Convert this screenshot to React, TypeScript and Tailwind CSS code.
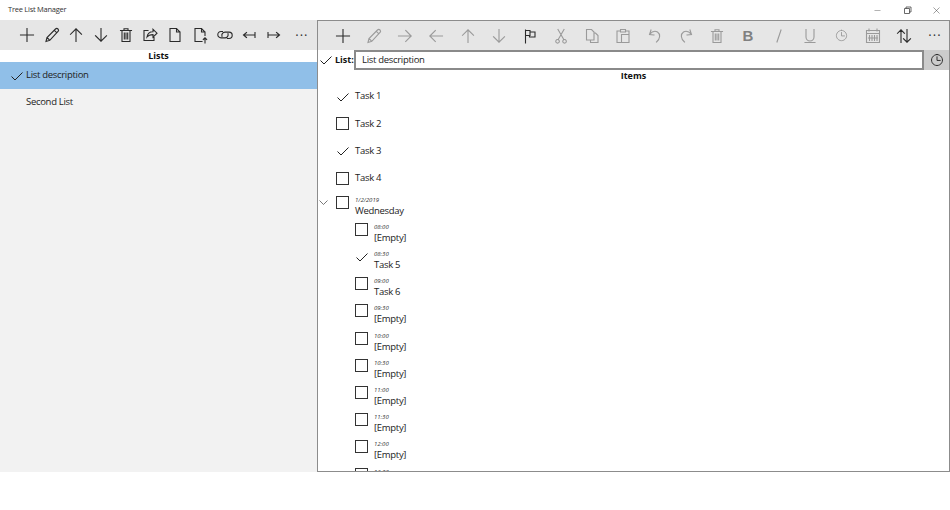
import type { ReactNode } from "react";
import { Minus, X } from "lucide-react";

const font = { fontFamily: '"Open Sans", "Liberation Sans", sans-serif' };

function Svg({ children, dim, size = 18 }: { children: ReactNode; dim?: boolean; size?: number }) {
  return (
    <svg
      width={size}
      height={size}
      viewBox="0 0 18 18"
      fill="none"
      stroke={dim ? "#9a9a9a" : "#2b2b2b"}
      strokeWidth="1.1"
      strokeLinecap="square"
      className="shrink-0"
    >
      {children}
    </svg>
  );
}

const icons: Record<string, ReactNode> = {
  plus: <path d="M9 2.5v13M2.5 9h13" />,
  pencil: <path d="M3 15.5l1-4L12.5 3a1.6 1.6 0 0 1 2.5 2.5L6.8 14.3zM4 11.5l2.8 2.8M11.3 4.3l2.5 2.5" />,
  up: <path d="M9 15.5V2.8M3.5 8.3L9 2.8l5.5 5.5" />,
  down: <path d="M9 2.5v12.7M3.5 9.7L9 15.2l5.5-5.5" />,
  right: <path d="M2.5 9h12.7M9.7 3.5L15.2 9l-5.5 5.5" />,
  left: <path d="M15.5 9H2.8M8.3 3.5L2.8 9l5.5 5.5" />,
  trash: <path d="M3.5 4.5h11M7 4.5V2.8h4v1.7M5 4.5v11h8v-11M7.3 7v6M9 7v6M10.7 7v6" />,
  share: <path d="M7 4.5H3v10h10v-3M6 11c.5-3.5 3-5.3 6-5.3V3.3l4 3.9-4 3.9V8.600c-2.500 0-4.700.7-6 2.400z" />,
  file: <path d="M4 2.500h6.500L14 6v9.500H4zM10.500 2.500V6H14" />,
  fileUp: <path d="M11 15.500H4v-13h6.500L14 6v3.500M10.500 2.500V6H14M14 17v-5M12.300 13.500L14 11.800l1.700 1.700" />,
  link: <path d="M6.500 5.500H5a3.200 3.200 0 0 0 0 6.400h4a3.200 3.200 0 0 0 3-4.200M11.500 12.500H13a3.200 3.200 0 0 0 0-6.400H9a3.200 3.200 0 0 0-3 4.200" />,
  outdent: <path d="M14.500 9H3.500M6.500 6.500L3.500 9l3 2.500M15 6.500v5" />,
  indent: <path d="M3.500 9h11M11.500 6.500l3 2.500-3 2.500M3 6.500v5" />,
  flag: <path d="M4.500 16V3M4.500 3.500h4.500v1.500h5v5H8.500V8.500h-4M9 5v3.500" />,
  cut: <path d="M6 2.500l5.500 9.500M12 2.500L6.500 12M5.500 12.500a1.800 1.800 0 1 0 .1 0zM12.500 12.500a1.800 1.800 0 1 0 .1 0z" />,
  copy: <path d="M3.500 2.500h5L11 5v8H3.500zM11 6h1.500L15 8.500v7H7.500V13" />,
  paste: <path d="M6 4H3v11.500h4M12 4h3v3M6.500 2.500h5V5h-5zM7.500 7.500H15v8H7.500z" />,
  undo: <path d="M5 3L3.500 7.500 8 8M3.500 7.500C6 4.500 9 3.500 11.500 5c3 2 3 6.500-1 10" />,
  redo: <path d="M13 3l1.500 4.500L10 8M14.500 7.500C12 4.500 9 3.500 6.500 5c-3 2-3 6.500 1 10" />,
  underline: <path d="M5 2.500v7.500a4 4 0 0 0 8 0V2.500M4 15.500h10" />,
  italic: <path d="M11 3l-4 12" />,
  clock: <path d="M9 2.800a6.200 6.200 0 1 0 .01 0zM9 5.500V9.500h3.500" />,
  calendar: <path d="M2.500 3.500h13v12h-13zM2.500 6.500h13M5 2v2M13 2v2M5.500 8.500v5M8 8.500v5M10.500 8.500v5M13 8.500v5M4.500 11h9" />,
  sort: <path d="M6 15.500V2.800M2.500 6.300L6 2.800l3.500 3.500M12 2.500v12.700M8.500 11.700l3.500 3.500 3.500-3.500" />,
};

function Dots() {
  return <span className="block w-[18px] shrink-0 text-center text-[13px] leading-none tracking-[1px] text-[#333]">···</span>;
}

function Check() {
  return (
    <svg width="14" height="14" viewBox="0 0 14 14" fill="none" stroke="#222" strokeWidth="1" className="shrink-0">
      <path d="M1.500 7.500l3.500 3.500 7.500-7.500" />
    </svg>
  );
}

function Mark({ done }: { done?: boolean }) {
  return (
    <span className="flex h-[13px] w-[13px] shrink-0 items-center justify-center">
      {done ? <Check /> : <span className="block h-[13px] w-[13px] border border-[#333]" />}
    </span>
  );
}

function Task({ label, done }: { label: string; done?: boolean }) {
  return (
    <div className="flex h-[27.2px] items-center pl-[18px]">
      <Mark done={done} />
      <span className="ml-[6px] text-[9.500px] tracking-[-0.3px] text-[#222]">{label}</span>
    </div>
  );
}

function Slot({ time, label, done }: { time: string; label: string; done?: boolean }) {
  return (
    <div className="flex h-[27.2px] shrink-0 items-center pl-[37px]">
      <Mark done={done} />
      <div className="ml-[6px] flex translate-y-[3px] flex-col pt-[3px]">
        <span className="text-[6px] italic leading-[8px] text-[#333]">{time}</span>
        <span className="text-[9.500px] leading-[14px] tracking-[-0.3px] text-[#222]">{label}</span>
      </div>
    </div>
  );
}

const leftTools = ["plus", "pencil", "up", "down", "trash", "share", "file", "fileUp", "link", "outdent", "indent"];
const rightTools: [string, boolean][] = [
  ["plus", false],
  ["pencil", true],
  ["right", true],
  ["left", true],
  ["up", true],
  ["down", true],
  ["flag", false],
  ["cut", true],
  ["copy", true],
  ["paste", true],
  ["undo", true],
  ["redo", true],
  ["trash", true],
];

const slots: [string, string, boolean?][] = [
  ["08:00", "[Empty]"],
  ["08:30", "Task 5", true],
  ["09:00", "Task 6"],
  ["09:30", "[Empty]"],
  ["10:00", "[Empty]"],
  ["10:30", "[Empty]"],
  ["11:00", "[Empty]"],
  ["11:30", "[Empty]"],
  ["12:00", "[Empty]"],
  ["12:30", "[Empty]"],
];

export default function App() {
  return (
    <div className="h-[510px] w-[950px] overflow-hidden bg-white" style={font}>
      <div className="flex h-5 items-center justify-between">
        <span className="pl-2 text-[7.500px] tracking-[-0.25px] text-[#333]">Tree List Manager</span>
        <div className="flex items-center">
          <span className="flex w-[30px] justify-center"><Minus size={9} strokeWidth={1} color="#333" /></span>
          <span className="flex w-[30px] justify-center">
            <svg width="9" height="9" viewBox="0 0 9 9" fill="none" stroke="#444" strokeWidth="0.800">
              <path d="M1.500 2.500h5v5h-5zM3 2.500V1h5v5H6.500" />
            </svg>
          </span>
          <span className="flex w-[28px] justify-center"><X size={11} strokeWidth={1} color="#333" /></span>
        </div>
      </div>

      <div className="flex h-[452px]">
        <aside className="flex w-[317px] shrink-0 flex-col bg-[#f2f2f2]">
          <div className="flex h-[30px] items-center bg-[#e6e6e6] pl-[18px]">
            <div className="flex items-center gap-[6.700px]">
              {leftTools.map((n, i) => (
                <Svg key={i}>{icons[n]}</Svg>
              ))}
            </div>
            <span className="ml-[10px]"><Dots /></span>
          </div>
          <div className="h-3 bg-white text-center text-[9px] font-bold leading-3 text-[#111]">Lists</div>
          <div className="flex h-[27px] items-center bg-[#90bfe8] pl-[10px] text-[9.500px] tracking-[-0.3px] text-[#222]">
            <Check />
            <span className="ml-[2px]">List description</span>
          </div>
          <div className="flex h-[27px] items-center pl-[26px] text-[9.500px] tracking-[-0.3px] text-[#222]">Second List</div>
        </aside>

        <main className="flex min-w-0 flex-1 flex-col overflow-hidden border border-[#8c8c8c]">
          <div className="flex h-[29px] shrink-0 items-center justify-between bg-[#e6e6e6] pl-4 pr-[5px]">
            {rightTools.map(([n, dim], i) => (
              <Svg key={i} dim={dim}>{icons[n]}</Svg>
            ))}
            <span className="w-[18px] shrink-0 text-center text-[15px] font-bold leading-none text-[#808080]" style={{ fontFamily: '"Liberation Sans", sans-serif' }}>B</span>
            <Svg dim>{icons.italic}</Svg>
            <Svg dim>{icons.underline}</Svg>
            <span className="flex w-[18px] shrink-0 justify-center"><Svg dim size={15}>{icons.clock}</Svg></span>
            <Svg dim>{icons.calendar}</Svg>
            <Svg>{icons.sort}</Svg>
            <Dots />
          </div>

          <div className="flex h-5 shrink-0 items-center">
            <span className="ml-[1px] flex w-[14px] justify-center"><Check /></span>
            <span className="ml-[2px] w-[19px] shrink-0 text-[9px] font-bold text-[#111]">List:</span>
            <div className="flex h-5 min-w-0 flex-1 items-center border-2 border-[#8a8a8a] bg-white pl-[6px] text-[9.500px] tracking-[-0.3px] text-[#222]">
              List description
            </div>
            <span className="flex h-5 w-[25px] items-center justify-center bg-[#cccccc]">
              <Svg size={16}>{icons.clock}</Svg>
            </span>
          </div>

          <div className="h-3 shrink-0 text-center text-[9px] font-bold leading-3 text-[#111]">Items</div>

          <div className="min-h-0 flex-1 overflow-hidden pt-[1px]">
            <Task label="Task 1" done />
            <Task label="Task 2" />
            <Task label="Task 3" done />
            <Task label="Task 4" />
            <div className="flex h-[24px] items-center pl-[1px] pt-[3px]">
              <svg width="9" height="9" viewBox="0 0 9 9" fill="none" stroke="#555" strokeWidth="0.800" className="-mt-[5px] shrink-0">
                <path d="M0.500 2.500L4.500 6.500l4-4" />
              </svg>
              <span className="-mt-[5px] ml-[8px]"><Mark /></span>
              <div className="ml-[6px] flex translate-y-[2px] flex-col">
                <span className="text-[6px] italic leading-[8px] text-[#333]">1/2/2019</span>
                <span className="text-[9.500px] leading-[14px] tracking-[-0.3px] text-[#222]">Wednesday</span>
              </div>
            </div>
            {slots.map(([t, l, d]) => (
              <Slot key={t} time={t} label={l} done={d} />
            ))}
          </div>
        </main>
      </div>
    </div>
  );
}
